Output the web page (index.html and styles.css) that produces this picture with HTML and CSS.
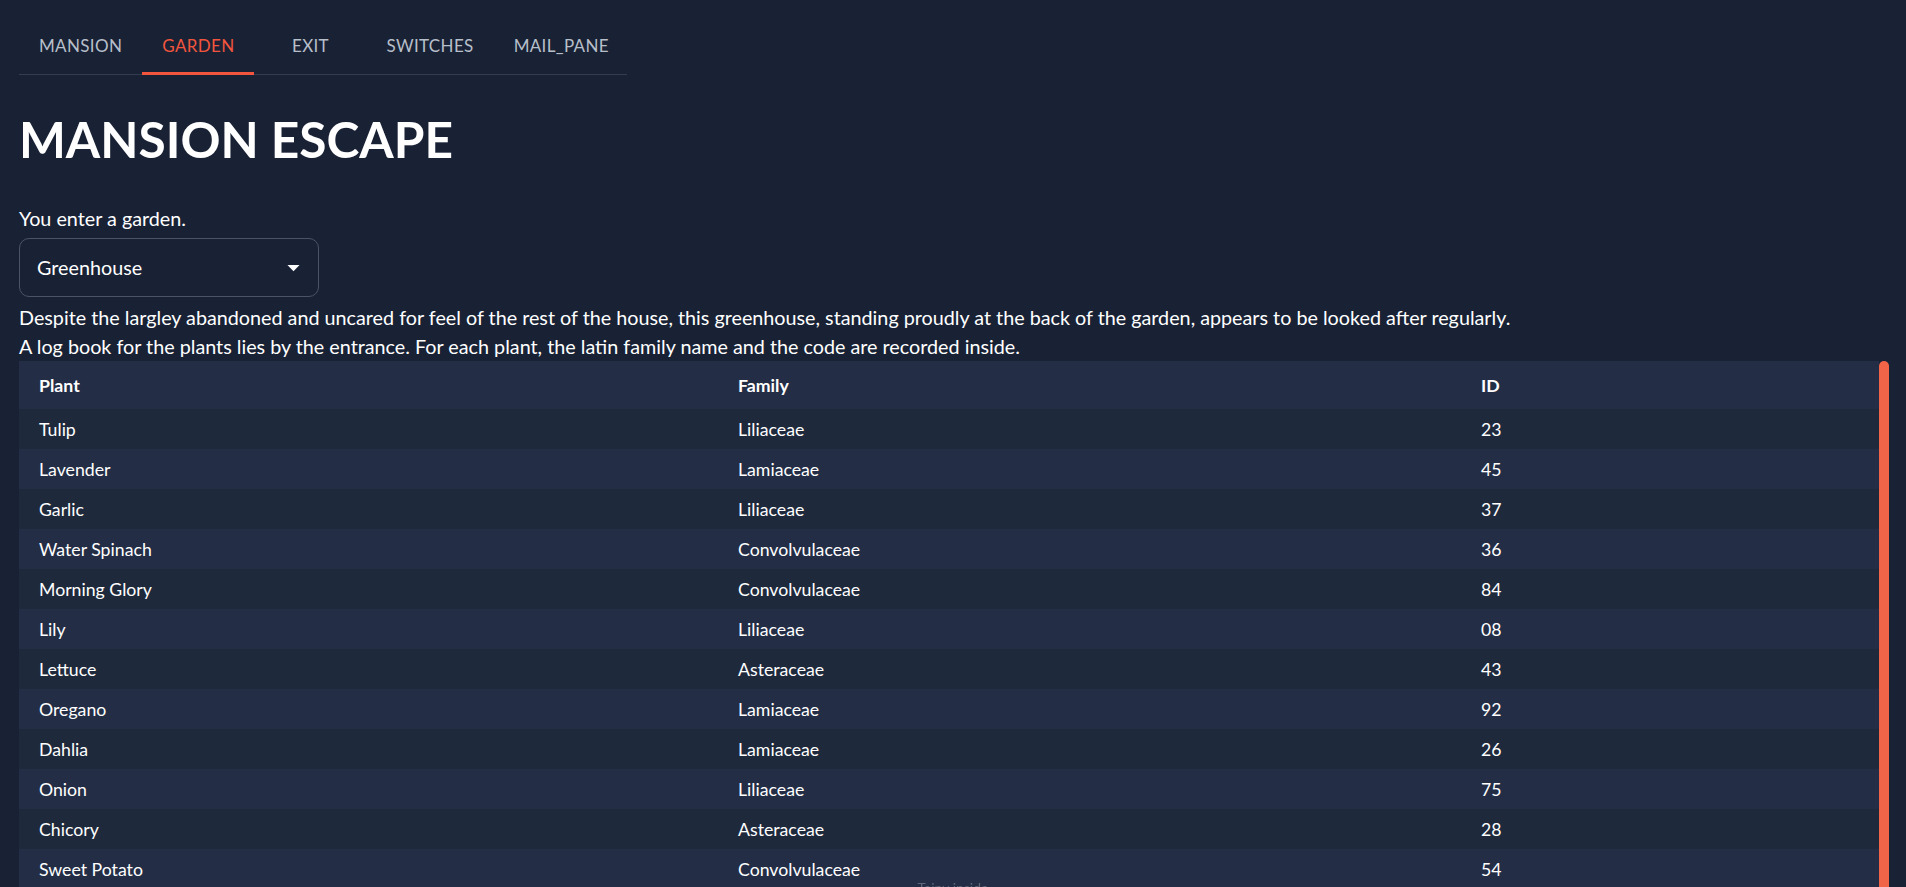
FILE: index.html
```html
<!DOCTYPE html>
<html lang="en">
<head>
<meta charset="utf-8">
<title>Mansion Escape</title>
<link rel="stylesheet" href="styles.css">
</head>
<body>
<div class="page">
  <nav class="tabs">
    <div class="tab">MANSION</div>
    <div class="tab active">GARDEN</div>
    <div class="tab">EXIT</div>
    <div class="tab">SWITCHES</div>
    <div class="tab">MAIL_PANE</div>
  </nav>
  <h1 class="title">MANSION ESCAPE</h1>
  <p class="intro">You enter a garden.</p>
  <div class="select">
    <span class="select-value">Greenhouse</span>
    <svg class="select-arrow" viewBox="0 0 24 24" width="29" height="29"><path d="M7 10l5 5 5-5z" fill="#ffffff"/></svg>
  </div>
  <p class="desc first">Despite the largley abandoned and uncared for feel of the rest of the house, this greenhouse, standing proudly at the back of the garden, appears to be looked after regularly.</p>
  <p class="desc">A log book for the plants lies by the entrance. For each plant, the latin family name and the code are recorded inside.</p>
  <div class="table-area">
    <div class="table-wrap">
      <table class="plants">
        <colgroup><col class="c1"><col class="c2"><col class="c3"></colgroup>
        <thead>
          <tr><th>Plant</th><th>Family</th><th>ID</th></tr>
        </thead>
        <tbody>
          <tr><td>Tulip</td><td>Liliaceae</td><td>23</td></tr>
          <tr><td>Lavender</td><td>Lamiaceae</td><td>45</td></tr>
          <tr><td>Garlic</td><td>Liliaceae</td><td>37</td></tr>
          <tr><td>Water Spinach</td><td>Convolvulaceae</td><td>36</td></tr>
          <tr><td>Morning Glory</td><td>Convolvulaceae</td><td>84</td></tr>
          <tr><td>Lily</td><td>Liliaceae</td><td>08</td></tr>
          <tr><td>Lettuce</td><td>Asteraceae</td><td>43</td></tr>
          <tr><td>Oregano</td><td>Lamiaceae</td><td>92</td></tr>
          <tr><td>Dahlia</td><td>Lamiaceae</td><td>26</td></tr>
          <tr><td>Onion</td><td>Liliaceae</td><td>75</td></tr>
          <tr><td>Chicory</td><td>Asteraceae</td><td>28</td></tr>
          <tr><td>Sweet Potato</td><td>Convolvulaceae</td><td>54</td></tr>
          <tr><td>Sunflower</td><td>Asteraceae</td><td>61</td></tr>
          <tr><td>Mint</td><td>Lamiaceae</td><td>19</td></tr>
        </tbody>
      </table>
    </div>
    <div class="scrollbar"><div class="thumb"></div></div>
  </div>
</div>
<div class="watermark">Taipy inside</div>
</body>
</html>
```

FILE: styles.css
```css
html, body {
  margin: 0;
  padding: 0;
  height: 100%;
  overflow: hidden;
  background: #192235;
}

body {
  font-family: Lato, "Open Sans", "Liberation Sans", sans-serif;
  color: #ffffff;
}

.page {
  padding: 16px 17px 0 19px;
}

.tabs {
  display: flex;
  width: 608px;
  border-bottom: 1px solid #343d50;
}

.tab {
  box-sizing: border-box;
  flex: none;
  min-width: 112px;
  height: 58px;
  padding: 0 20px;
  display: flex;
  align-items: center;
  justify-content: center;
  font-size: 17px;
  letter-spacing: 0.02em;
  color: #b7bfca;
  white-space: nowrap;
}

.tab.active {
  color: #f1553d;
  box-shadow: inset 0 -3px 0 #f1553d;
  margin-bottom: -1px;
  height: 59px;
}

.title {
  margin: 34px 0 0 0;
  font-size: 49.6px;
  line-height: 60px;
  font-weight: 700;
  color: #ffffff;
}

.intro {
  margin: 37px 0 0 0;
  font-size: 19.75px;
  line-height: 26px;
}

.select {
  box-sizing: border-box;
  width: 300px;
  height: 59px;
  margin-top: 6px;
  border: 1px solid #4b5466;
  border-radius: 10px;
  display: flex;
  align-items: center;
  justify-content: space-between;
  padding: 0 10px 0 17px;
}

.select-value {
  font-size: 19.75px;
}

.select-arrow {
  display: block;
}

.desc {
  margin: 0;
  font-size: 19.75px;
  line-height: 29px;
}

.desc.first {
  margin-top: 6px;
}

.table-area {
  display: flex;
  height: 600px;
}

.table-wrap {
  flex: 1;
  overflow: hidden;
}

.scrollbar {
  width: 10px;
  display: flex;
  flex-direction: column;
}

.thumb {
  height: 560px;
  background: #f26447;
  border-radius: 5px;
}

.plants {
  width: 100%;
  border-collapse: collapse;
  table-layout: fixed;
  font-size: 17.7px;
}

.c1 { width: 699px; }
.c2 { width: 743px; }

.plants th {
  height: 48px;
  padding: 0 20px;
  text-align: left;
  font-weight: 700;
  background: #232e46;
}

.plants td {
  height: 40px;
  padding: 0 20px;
  background: #1e293c;
}

.plants tbody tr:nth-child(even) td {
  background: #232e46;
}

.watermark {
  position: fixed;
  left: 0;
  right: 0;
  bottom: -9px;
  text-align: center;
  font-size: 14px;
  color: #5d6577;
}
```
